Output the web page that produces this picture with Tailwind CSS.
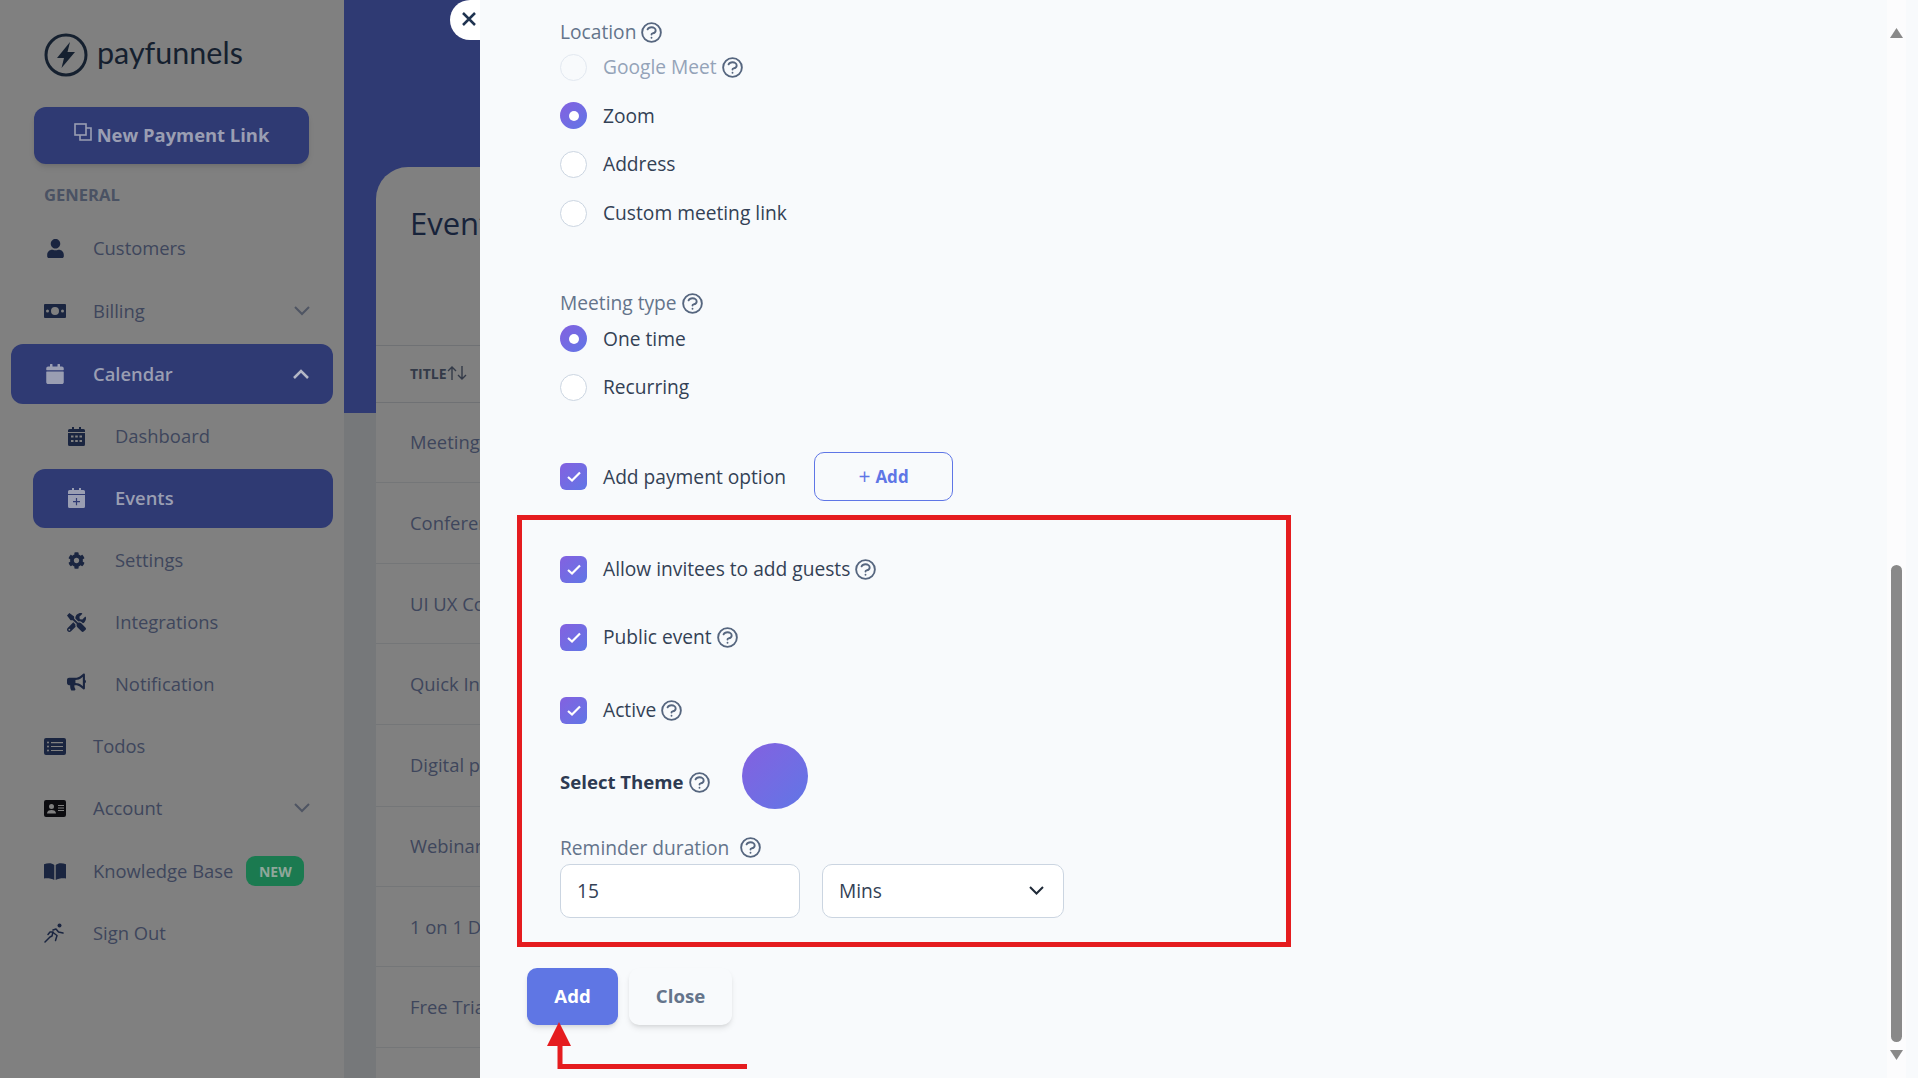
<!DOCTYPE html>
<html lang="en">
<head>
    <meta charset="UTF-8">
    <meta name="viewport" content="width=device-width, initial-scale=1.0">
    <title>payfunnels - Events</title>
    <script src="https://cdn.jsdelivr.net/npm/@tailwindcss/browser@4"></script>
</head>
<body class="w-[1918px] h-[1078px] overflow-hidden relative flex bg-[#808080] font-['Open_Sans',sans-serif]">

    <!-- sidebar -->
    <aside class="w-[344px] h-full shrink-0 bg-[#808080] text-[18.4px] text-[#3e465c]">
        <div class="h-[107px] pl-[44px] pt-[33px] flex items-start gap-[9px]">
            <svg class="w-[44px] h-[44px]" viewBox="0 0 44 44" fill="none">
                <circle cx="22" cy="22" r="20" stroke="#15202f" stroke-width="3"/>
                <path d="M26 9 L13 25 H20 L17.5 35 L31 19 H23.5 Z" fill="#15202f"/>
            </svg>
            <span class="font-['Lato',sans-serif] text-[30.5px] leading-[38px] text-[#15202f]">payfunnels</span>
        </div>
        <div class="ml-[34px] w-[275px] h-[57px] pb-[2px] rounded-xl bg-[#2f3a73] shadow-md flex items-center justify-center gap-[5px] font-bold text-[#9a9eb2] text-[18.4px]">
            <svg class="w-[18px] h-[18px] -mt-[5px]" viewBox="0 0 18 18" fill="none" stroke="currentColor" stroke-width="1.6"><rect x="1" y="1" width="11" height="11"/><path d="M12 5h5v12H6v-5"/></svg>
            New Payment Link
        </div>
        <div class="h-[53px] pl-[44px] pt-[19px] text-[16.6px] leading-[24px] font-bold text-[#4a5263]">GENERAL</div>

        <div class="h-[62px] pl-[44px] flex items-center">
            <span class="w-[22px] flex justify-center"><svg class="w-[17px] h-[19px]" viewBox="0 0 448 512" fill="#1a2540"><path d="M224 256c70.7 0 128-57.3 128-128S294.7 0 224 0 96 57.3 96 128s57.3 128 128 128zm89.6 32h-16.7c-22.2 10.2-46.9 16-72.9 16s-50.6-5.8-72.9-16h-16.7C60.2 288 0 348.2 0 422.4V464c0 26.5 21.5 48 48 48h352c26.5 0 48-21.5 48-48v-41.6c0-74.2-60.2-134.4-134.4-134.4z"/></svg></span>
            <span class="ml-[27px]">Customers</span>
        </div>
        <div class="h-[62px] mt-px pl-[44px] pr-[34px] flex items-center">
            <svg class="w-[22px] h-[14px]" viewBox="0 0 22 14"><path fill="#1a2540" fill-rule="evenodd" d="M1 0h20a1 1 0 0 1 1 1v12a1 1 0 0 1-1 1H1a1 1 0 0 1-1-1V1a1 1 0 0 1 1-1zm10 3a4 4 0 1 0 0 8 4 4 0 0 0 0-8zM3.500 5.500a1.500 1.500 0 1 0 0 3 1.500 1.500 0 0 0 0-3zm15 0a1.500 1.500 0 1 0 0 3 1.500 1.500 0 0 0 0-3z"/></svg>
            <span class="ml-[27px] flex-1">Billing</span>
            <svg class="w-[16px] h-[10px]" viewBox="0 0 16 10" fill="none" stroke="#4f5563" stroke-width="2"><path d="M1 1l7 7 7-7"/></svg>
        </div>
        <div class="h-[60px] mt-[2px] ml-[11px] w-[322px] rounded-xl bg-[#2f3a73] pl-[33px] pr-[24px] flex items-center font-semibold text-[#9a9eb2]">
            <span class="w-[22px] flex justify-center"><svg class="w-[18px] h-[20px]" viewBox="0 0 448 512" fill="currentColor"><path d="M12 192h424c6.600 0 12 5.400 12 12v260c0 26.500-21.500 48-48 48H48c-26.500 0-48-21.500-48-48V204c0-6.600 5.400-12 12-12zm436-44v-36c0-26.500-21.500-48-48-48h-48V12c0-6.600-5.400-12-12-12h-40c-6.600 0-12 5.400-12 12v52H160V12c0-6.600-5.400-12-12-12h-40c-6.600 0-12 5.400-12 12v52H48C21.500 64 0 85.500 0 112v36c0 6.600 5.400 12 12 12h424c6.600 0 12-5.400 12-12z"/></svg></span>
            <span class="ml-[27px] flex-1">Calendar</span>
            <svg class="w-[16px] h-[10px]" viewBox="0 0 16 10" fill="none" stroke="#b4b7c6" stroke-width="2.500"><path d="M1 9l7-7 7 7"/></svg>
        </div>
        <div class="h-[62px] mt-px pl-[68px] flex items-center">
            <svg class="w-[17px] h-[19px]" viewBox="0 0 17 19"><path fill="#1a2540" fill-rule="evenodd" d="M4 0h2v2h5V0h2v2h2.500A1.500 1.500 0 0 1 17 3.500V5H0V3.500A1.500 1.500 0 0 1 1.500 2H4zM0 6h17v11.500a1.500 1.500 0 0 1-1.500 1.500h-14A1.500 1.500 0 0 1 0 17.500zm3 2.500v2h2.500v-2zm4.200 0v2h2.600v-2zm4.300 0v2H14v-2zM3 13v2h2.500v-2zm4.200 0v2h2.600v-2zm4.300 0v2H14v-2z"/></svg>
            <span class="ml-[30px]">Dashboard</span>
        </div>
        <div class="h-[59px] mt-[2px] pb-[2px] ml-[33px] w-[300px] rounded-xl bg-[#2f3a73] pl-[35px] flex items-center font-semibold text-[#9a9eb2]">
            <svg class="w-[17px] h-[20px]" viewBox="0 0 17 20"><path fill="currentColor" fill-rule="evenodd" d="M4 0h2v2h5V0h2v2h2.500A1.500 1.500 0 0 1 17 3.500V6H0V3.500A1.500 1.500 0 0 1 1.500 2H4zM0 7h17v11.500a1.500 1.500 0 0 1-1.500 1.500h-14A1.500 1.500 0 0 1 0 18.500zm7.900 3v3H5v1.200h2.900v3h1.200v-3H12V13H9.100v-3z"/></svg>
            <span class="ml-[30px]">Events</span>
        </div>
        <div class="h-[62px] mt-px pl-[68px] flex items-center">
            <svg class="w-[17px] h-[17px]" viewBox="0 0 512 512" fill="#1a2540"><path d="M487.400 315.700l-42.600-24.600c4.300-23.200 4.300-47 0-70.200l42.600-24.600c4.900-2.800 7.100-8.600 5.500-14-11.100-35.600-30-67.800-54.700-94.600-3.800-4.100-10-5.100-14.800-2.300L380.800 110c-17.900-15.400-38.500-27.300-60.800-35.100V25.800c0-5.600-3.900-10.500-9.400-11.700-36.700-8.200-74.300-7.800-109.200 0-5.500 1.200-9.400 6.100-9.400 11.700V75c-22.200 7.900-42.800 19.800-60.800 35.100L88.700 85.500c-4.900-2.800-11-1.900-14.800 2.300-24.700 26.700-43.600 58.900-54.700 94.600-1.700 5.400.6 11.200 5.500 14L67.300 221c-4.300 23.200-4.300 47 0 70.200l-42.600 24.600c-4.900 2.800-7.100 8.600-5.500 14 11.100 35.600 30 67.800 54.700 94.600 3.800 4.100 10 5.100 14.800 2.300l42.600-24.600c17.900 15.400 38.500 27.300 60.800 35.100v49.200c0 5.600 3.900 10.500 9.400 11.700 36.700 8.200 74.300 7.800 109.200 0 5.500-1.200 9.400-6.100 9.400-11.700v-49.200c22.200-7.900 42.800-19.800 60.800-35.100l42.600 24.600c4.900 2.800 11 1.900 14.800-2.300 24.700-26.700 43.600-58.900 54.700-94.600 1.500-5.500-.7-11.300-5.600-14.100zM256 336c-44.100 0-80-35.900-80-80s35.900-80 80-80 80 35.900 80 80-35.900 80-80 80z"/></svg>
            <span class="ml-[30px]">Settings</span>
        </div>
        <div class="h-[62px] pl-[68px] flex items-center">
            <svg class="w-[19px] h-[19px] -ml-px" viewBox="0 0 512 512" fill="#1a2540"><path d="M501.100 395.700L384 278.600c-23.100-23.100-57.600-27.600-85.400-13.900L192 158.100V96L64 0 0 64l96 128h62.100l106.600 106.600c-13.600 27.800-9.200 62.300 13.900 85.400l117.100 117.100c14.600 14.600 38.200 14.600 52.700 0l52.700-52.700c14.500-14.600 14.500-38.200 0-52.700zM331.700 225c28.300 0 54.900 11 74.900 31l19.400 19.400c15.800-6.900 30.800-16.500 43.800-29.500 37.100-37.100 49.700-89.300 37.900-136.700-2.200-9-13.500-12.100-20.100-5.500l-74.400 74.400-67.900-11.300L334 98.900l74.400-74.400c6.600-6.600 3.400-17.900-5.700-20.200-47.400-11.700-99.600.9-136.600 37.900-28.500 28.500-41.900 66.100-41.200 103.600l82.100 82.100c8.100-1.900 16.500-2.900 24.700-2.900zm-103.900 82l-56.700-56.700L18.700 402.800c-25 25-25 65.500 0 90.500s65.500 25 90.500 0l123.600-123.600c-7.600-19.900-9.900-41.600-5-62.700zM64 472c-13.200 0-24-10.800-24-24 0-13.300 10.700-24 24-24s24 10.700 24 24c0 13.200-10.700 24-24 24z"/></svg>
            <span class="ml-[29px]">Integrations</span>
        </div>
        <div class="h-[62px] pl-[68px] flex items-center">
            <svg class="w-[19px] h-[18px] -ml-px -mt-[5px]" viewBox="0 0 576 512" fill="#1a2540"><path d="M576 240c0-23.630-12.950-44.040-32-55.120V32.010C544 23.260 537.020 0 512 0c-7.120 0-14.190 2.380-19.980 7.020l-85.030 68.030C364.280 109.190 310.660 128 256 128H64c-35.350 0-64 28.650-64 64v96c0 35.350 28.650 64 64 64h33.700c-1.390 10.480-2.180 21.140-2.180 32 0 39.770 9.260 77.350 25.560 110.950 5.190 10.690 16.520 17.050 28.400 17.050h74.280c26.050 0 41.690-29.840 25.900-50.560-16.400-21.520-26.150-48.360-26.150-77.440 0-11.110 1.620-21.790 4.410-32H256c54.660 0 108.280 18.810 150.980 52.950l85.030 68.030a32.023 32.023 0 0 0 19.980 7.020c24.920 0 32-22.780 32-32V295.130C563.050 284.040 576 263.630 576 240zm-96 141.420l-33.050-26.440C392.950 311.780 325.120 288 256 288v-96c69.120 0 136.950-23.780 190.950-66.980L480 98.580v282.840z"/></svg>
            <span class="ml-[29px]">Notification</span>
        </div>
        <div class="h-[62px] pl-[44px] flex items-center">
            <svg class="w-[22px] h-[17px]" viewBox="0 0 22 17"><path fill="#1a2540" fill-rule="evenodd" d="M2 0h18a2 2 0 0 1 2 2v13a2 2 0 0 1-2 2H2a2 2 0 0 1-2-2V2a2 2 0 0 1 2-2zm2 3.500a1 1 0 1 0 0 2 1 1 0 0 0 0-2zm3 .500v1.200h12V4zM4 7.500a1 1 0 1 0 0 2 1 1 0 0 0 0-2zm3 .400v1.200h12V7.900zM4 11.500a1 1 0 1 0 0 2 1 1 0 0 0 0-2zm3 .400v1.200h12v-1.200z"/></svg>
            <span class="ml-[27px]">Todos</span>
        </div>
        <div class="h-[62px] pl-[44px] pr-[34px] flex items-center">
            <svg class="w-[22px] h-[17px]" viewBox="0 0 22 17"><path fill="#0c0c10" fill-rule="evenodd" d="M2 0h18a2 2 0 0 1 2 2v13a2 2 0 0 1-2 2H2a2 2 0 0 1-2-2V2a2 2 0 0 1 2-2zm5.500 4a2.500 2.500 0 1 0 0 5 2.500 2.500 0 0 0 0-5zM3 13.500h9c0-2.500-2-3.500-4.500-3.500S3 11 3 13.500zM14 5v1h6V5zm0 2.500v1h6v-1zm0 2.500v1h6v-1z"/></svg>
            <span class="ml-[27px] flex-1">Account</span>
            <svg class="w-[16px] h-[10px]" viewBox="0 0 16 10" fill="none" stroke="#4f5563" stroke-width="2"><path d="M1 1l7 7 7-7"/></svg>
        </div>
        <div class="h-[62px] mt-px pl-[44px] flex items-center">
            <svg class="w-[22px] h-[17px]" viewBox="0 0 22 17" fill="#1a2540"><path d="M10.300 2v15C8 15.700 4 15 0 15.500V1.300C4-.2 8 0 10.300 2z"/><path d="M11.700 2v15c2.300-1.300 6.300-2 10.300-1.500V1.300C18-.2 14 0 11.700 2z"/></svg>
            <span class="ml-[27px]">Knowledge Base</span>
            <span class="ml-[13px] w-[58px] h-[30px] rounded-[9px] bg-[#1b7a50] text-[#8fa79b] text-[14px] font-bold flex items-center justify-center">NEW</span>
        </div>
        <div class="h-[62px] pl-[44px] flex items-center">
            <svg class="w-[22px] h-[20px]" viewBox="0 0 22 20" fill="none" stroke="#1a2540" stroke-width="1.500" stroke-linecap="round" stroke-linejoin="round"><circle cx="15.500" cy="2.500" r="2" fill="#1a2540" stroke="none"/><path d="M1 19l5-5 2-1 1-4-3 0-2 2.500"/><path d="M9 7l3-1 2.500 3 4.500 1"/><path d="M9 9.500l4 3-1.500 5"/></svg>
            <span class="ml-[27px]">Sign Out</span>
        </div>
    </aside>

    <!-- page behind the drawer -->
    <main class="flex-1 h-full bg-[#76787a] overflow-hidden">
        <div class="h-[413px] bg-[#2f3a73]"></div>
        <div class="-mt-[246px] ml-[32px] h-[912px] bg-[#808080] rounded-tl-[32px] text-[18.4px] text-[#3e465c]">
            <div class="h-[178px] pl-[34px] pt-[30px] text-[31px] leading-[52px] font-medium text-[#17233a]">Events</div>
            <div class="h-[58px] pb-[2px] border-y border-[#6f7174] pl-[34px] flex items-center text-[14px] font-bold text-[#333a48]">TITLE
                <svg class="w-[20px] h-[14px]" viewBox="0 0 20 14" fill="none" stroke="#333a48" stroke-width="1.400"><path d="M5 14V1M1 5l4-4 4 4M15 0v13M11 9l4 4 4-4"/></svg>
            </div>
            <div class="h-[80px] pl-[34px] pt-[25px] border-b border-[#747678]">Meeting</div>
            <div class="h-[81px] pl-[34px] pt-[26px] border-b border-[#747678]">Conference</div>
            <div class="h-[80px] pl-[34px] pt-[26px] border-b border-[#747678]">UI UX Course</div>
            <div class="h-[81px] pl-[34px] pt-[26px] border-b border-[#747678]">Quick Intro</div>
            <div class="h-[82px] pl-[34px] pt-[26px] border-b border-[#747678]">Digital products</div>
            <div class="h-[80px] pl-[34px] pt-[25px] border-b border-[#747678]">Webinar</div>
            <div class="h-[80px] pl-[34px] pt-[26px] border-b border-[#747678]">1 on 1 Demo</div>
            <div class="h-[81px] pl-[34px] pt-[26px] border-b border-[#747678]">Free Trial</div>
        </div>
    </main>

    <!-- close tab of the drawer -->
    <button class="absolute left-[450px] top-0 w-[34px] h-[40px] rounded-l-full bg-white flex items-center pl-[12px] pb-[2px]">
        <svg class="w-[14px] h-[14px]" viewBox="0 0 14 14" fill="none" stroke="#1f3350" stroke-width="2.500"><path d="M1 1l12 12M13 1L1 13"/></svg>
    </button>

    <!-- drawer -->
    <section class="absolute left-[480px] top-0 w-[1438px] h-[1078px] bg-[#f8fafc] pl-[80px] text-[19.2px] text-[#334155]">
        <div class="h-[24px] mt-[20px] flex items-center gap-[3px] text-[#64748b]">Location
            <svg class="w-[25px] h-[25px] text-[#56667f]" fill="none" viewBox="0 0 24 24" stroke="currentColor" stroke-width="1.800"><path stroke-linecap="round" stroke-linejoin="round" d="M8.228 9c.549-1.165 2.030-2 3.772-2 2.210 0 4 1.343 4 3 0 1.400-1.278 2.575-3.006 2.907-.542.104-.994.540-.994 1.093m0 3h.01M21 12a9 9 0 11-18 0 9 9 0 0118 0z"/></svg>
        </div>
        <div class="h-[48.670px] -mt-px flex items-center text-[#94a3b8]">
            <span class="w-[27px] h-[27px] rounded-full border border-[#e2e8f0] bg-[#f8fafc]"></span>
            <span class="ml-[16px]">Google Meet</span>
            <svg class="ml-[3px] w-[25px] h-[25px] text-[#56667f]" fill="none" viewBox="0 0 24 24" stroke="currentColor" stroke-width="1.800"><path stroke-linecap="round" stroke-linejoin="round" d="M8.228 9c.549-1.165 2.030-2 3.772-2 2.210 0 4 1.343 4 3 0 1.400-1.278 2.575-3.006 2.907-.542.104-.994.540-.994 1.093m0 3h.01M21 12a9 9 0 11-18 0 9 9 0 0118 0z"/></svg>
        </div>
        <div class="h-[48.670px] flex items-center">
            <span class="w-[27px] h-[27px] rounded-full bg-linear-to-br from-[#8360e0] to-[#5f76e6] flex items-center justify-center"><span class="w-[10px] h-[10px] rounded-full bg-white"></span></span>
            <span class="ml-[16px]">Zoom</span>
        </div>
        <div class="h-[48.670px] flex items-center">
            <span class="w-[27px] h-[27px] rounded-full border border-[#cbd5e1] bg-white"></span>
            <span class="ml-[16px]">Address</span>
        </div>
        <div class="h-[48.670px] flex items-center">
            <span class="w-[27px] h-[27px] rounded-full border border-[#cbd5e1] bg-white"></span>
            <span class="ml-[16px]">Custom meeting link</span>
        </div>

        <div class="h-[24px] mt-[54px] flex items-center gap-[3px] text-[#64748b]">Meeting type
            <svg class="w-[25px] h-[25px] text-[#56667f]" fill="none" viewBox="0 0 24 24" stroke="currentColor" stroke-width="1.800"><path stroke-linecap="round" stroke-linejoin="round" d="M8.228 9c.549-1.165 2.030-2 3.772-2 2.210 0 4 1.343 4 3 0 1.400-1.278 2.575-3.006 2.907-.542.104-.994.540-.994 1.093m0 3h.01M21 12a9 9 0 11-18 0 9 9 0 0118 0z"/></svg>
        </div>
        <div class="h-[48.670px] -mt-px flex items-center">
            <span class="w-[27px] h-[27px] rounded-full bg-linear-to-br from-[#8360e0] to-[#5f76e6] flex items-center justify-center"><span class="w-[10px] h-[10px] rounded-full bg-white"></span></span>
            <span class="ml-[16px]">One time</span>
        </div>
        <div class="h-[48.670px] flex items-center">
            <span class="w-[27px] h-[27px] rounded-full border border-[#cbd5e1] bg-white"></span>
            <span class="ml-[16px]">Recurring</span>
        </div>

        <div class="h-[49px] mt-[40px] flex items-center">
            <span class="w-[27px] h-[27px] rounded-[6px] bg-linear-to-br from-[#8360e0] to-[#5f76e6] flex items-center justify-center">
                <svg class="w-[14px] h-[11px]" viewBox="0 0 14 11" fill="none" stroke="white" stroke-width="2.200"><path d="M1 6l4 3.500L13 1.500"/></svg>
            </span>
            <span class="ml-[16px] mt-px">Add payment option</span>
            <span class="ml-[28px] w-[139px] h-[49px] rounded-[10px] border border-[#5f76e6] text-[#5f76e6] text-[17px] font-bold flex items-center justify-center"><span class="font-normal text-[21px] leading-none mr-[5px]">+</span>Add</span>
        </div>

        <div class="h-[24px] mt-[57px] flex items-center">
            <span class="w-[27px] h-[27px] rounded-[6px] bg-linear-to-br from-[#8360e0] to-[#5f76e6] flex items-center justify-center">
                <svg class="w-[14px] h-[11px]" viewBox="0 0 14 11" fill="none" stroke="white" stroke-width="2.200"><path d="M1 6l4 3.500L13 1.500"/></svg>
            </span>
            <span class="ml-[16px] -mt-px">Allow invitees to add guests</span>
            <svg class="ml-[3px] w-[25px] h-[25px] text-[#56667f]" fill="none" viewBox="0 0 24 24" stroke="currentColor" stroke-width="1.800"><path stroke-linecap="round" stroke-linejoin="round" d="M8.228 9c.549-1.165 2.030-2 3.772-2 2.210 0 4 1.343 4 3 0 1.400-1.278 2.575-3.006 2.907-.542.104-.994.540-.994 1.093m0 3h.01M21 12a9 9 0 11-18 0 9 9 0 0118 0z"/></svg>
        </div>
        <div class="h-[24px] mt-[44px] flex items-center">
            <span class="w-[27px] h-[27px] rounded-[6px] bg-linear-to-br from-[#8360e0] to-[#5f76e6] flex items-center justify-center">
                <svg class="w-[14px] h-[11px]" viewBox="0 0 14 11" fill="none" stroke="white" stroke-width="2.200"><path d="M1 6l4 3.500L13 1.500"/></svg>
            </span>
            <span class="ml-[16px] -mt-px">Public event</span>
            <svg class="ml-[3px] w-[25px] h-[25px] text-[#56667f]" fill="none" viewBox="0 0 24 24" stroke="currentColor" stroke-width="1.800"><path stroke-linecap="round" stroke-linejoin="round" d="M8.228 9c.549-1.165 2.030-2 3.772-2 2.210 0 4 1.343 4 3 0 1.400-1.278 2.575-3.006 2.907-.542.104-.994.540-.994 1.093m0 3h.01M21 12a9 9 0 11-18 0 9 9 0 0118 0z"/></svg>
        </div>
        <div class="h-[24px] mt-[49px] flex items-center">
            <span class="w-[27px] h-[27px] rounded-[6px] bg-linear-to-br from-[#8360e0] to-[#5f76e6] flex items-center justify-center">
                <svg class="w-[14px] h-[11px]" viewBox="0 0 14 11" fill="none" stroke="white" stroke-width="2.200"><path d="M1 6l4 3.500L13 1.500"/></svg>
            </span>
            <span class="ml-[16px] -mt-px">Active</span>
            <svg class="ml-[3px] w-[25px] h-[25px] text-[#56667f]" fill="none" viewBox="0 0 24 24" stroke="currentColor" stroke-width="1.800"><path stroke-linecap="round" stroke-linejoin="round" d="M8.228 9c.549-1.165 2.030-2 3.772-2 2.210 0 4 1.343 4 3 0 1.400-1.278 2.575-3.006 2.907-.542.104-.994.540-.994 1.093m0 3h.01M21 12a9 9 0 11-18 0 9 9 0 0118 0z"/></svg>
        </div>

        <div class="h-[66px] mt-[20px] flex items-start">
            <span class="mt-[27px] h-[24px] flex items-center font-bold text-[18.6px] text-[#2d3a52]">Select Theme</span>
            <svg class="mt-[27px] ml-[3px] w-[25px] h-[25px] text-[#56667f]" fill="none" viewBox="0 0 24 24" stroke="currentColor" stroke-width="1.800"><path stroke-linecap="round" stroke-linejoin="round" d="M8.228 9c.549-1.165 2.030-2 3.772-2 2.210 0 4 1.343 4 3 0 1.400-1.278 2.575-3.006 2.907-.542.104-.994.540-.994 1.093m0 3h.01M21 12a9 9 0 11-18 0 9 9 0 0118 0z"/></svg>
            <span class="ml-[30px] w-[66px] h-[66px] rounded-full bg-linear-to-br from-[#8360e0] to-[#5f76e6]"></span>
        </div>

        <div class="h-[24px] mt-[27px] flex items-center gap-[9px] text-[#64748b]">Reminder duration
            <svg class="w-[25px] h-[25px] text-[#56667f]" fill="none" viewBox="0 0 24 24" stroke="currentColor" stroke-width="1.800"><path stroke-linecap="round" stroke-linejoin="round" d="M8.228 9c.549-1.165 2.030-2 3.772-2 2.210 0 4 1.343 4 3 0 1.400-1.278 2.575-3.006 2.907-.542.104-.994.540-.994 1.093m0 3h.01M21 12a9 9 0 11-18 0 9 9 0 0118 0z"/></svg>
        </div>
        <div class="mt-[4px] flex gap-[22px]">
            <div class="w-[240px] h-[54px] rounded-[10px] border border-[#cbd5e1] bg-white pl-[16px] flex items-center">15</div>
            <div class="w-[242px] h-[54px] rounded-[10px] border border-[#cbd5e1] bg-white pl-[16px] pr-[19px] flex items-center justify-between">Mins
                <svg class="w-[15px] h-[9px]" viewBox="0 0 15 9" fill="none" stroke="#1f2937" stroke-width="2"><path d="M1 1l6.500 6.500L14 1"/></svg>
            </div>
        </div>

        <div class="mt-[50px] -ml-[33px] flex gap-[11px] font-bold text-[18.6px]">
            <button class="w-[91px] h-[57px] rounded-[10px] bg-[#5f76e4] text-white shadow-md">Add</button>
            <button class="w-[103px] h-[57px] rounded-[10px] bg-[#f8fafc] text-[#64748b] shadow-md">Close</button>
        </div>
    </section>

    <!-- scrollbar -->
    <div class="absolute left-[1887px] top-0 w-[19px] h-[1078px] bg-[#fcfcfd]">
        <svg class="absolute left-[3px] top-[28px] w-[13px] h-[10px]" viewBox="0 0 13 10" fill="#898989"><path d="M6.500 0L13 10H0z"/></svg>
        <div class="absolute left-[4px] top-[565px] w-[11px] h-[477px] rounded-full bg-[#898989]"></div>
        <svg class="absolute left-[3px] top-[1050px] w-[13px] h-[10px]" viewBox="0 0 13 10" fill="#898989"><path d="M0 0h13L6.500 10z"/></svg>
    </div>

    <!-- red annotation -->
    <div class="absolute left-[517px] top-[515px] w-[774px] h-[432px] border-[5px] border-[#e51c1f]"></div>
    <svg class="absolute left-[540px] top-[1020px] w-[215px] h-[52px]" viewBox="0 0 215 52" fill="none">
        <path d="M20 24V46.500H207" stroke="#e51c1f" stroke-width="5"/>
        <path d="M19 2L31 26H7z" fill="#e51c1f"/>
    </svg>
</body>
</html>
